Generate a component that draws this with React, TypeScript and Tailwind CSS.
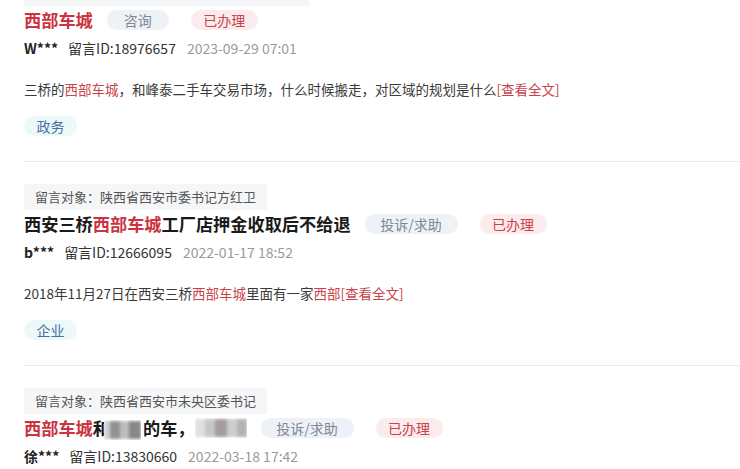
import React from "react";

const RED = "text-[#cc3340]";

type Item = {
  target?: string;
  title: React.ReactNode;
  type: string;
  typeW: string;
  user: string;
  id: string;
  date: string;
  body?: React.ReactNode;
  tag?: string;
};

const Hl = ({ children }: { children: React.ReactNode }) => <span className="text-[#c9434b]">{children}</span>;

// mosaic used to hide part of the third title
const Blur = ({ w, dark }: { w: number; dark?: boolean }) => (
  <span className="inline-flex h-[20px] items-center overflow-hidden bg-white align-middle" style={{ width: w }}>
    <span className="flex h-[18px] w-full blur-[1.5px]">
      {dark ? (
        <>
          <span className="h-full w-[6px] bg-[#d0d0d0]" />
          <span className="h-full w-[10px] bg-[#929292]" />
          <span className="h-full w-[9px] bg-[#bdbdbd]" />
          <span className="h-full w-[12px] bg-[#888]" />
        </>
      ) : (
        <>
          <span className="h-full w-[10px] bg-[#e0e0e0]" />
          <span className="h-full w-[10px] bg-[#c6c6c6]" />
          <span className="h-full w-[12px] bg-[#a59d9d]" />
          <span className="h-full w-[10px] bg-[#cdcdcd]" />
          <span className="h-full w-[10px] bg-[#b3b3b3]" />
        </>
      )}
    </span>
  </span>
);

const items: Item[] = [
  {
    title: <span className={RED}>西部车城</span>,
    type: "咨询",
    typeW: "w-[62px]",
    user: "W***",
    id: "留言ID:18976657",
    date: "2023-09-29 07:01",
    body: (
      <>
        三桥的<Hl>西部车城</Hl>，和峰泰二手车交易市场，什么时候搬走，对区域的规划是什么<Hl>[查看全文]</Hl>
      </>
    ),
    tag: "政务",
  },
  {
    target: "留言对象：陕西省西安市委书记方红卫",
    title: (
      <>
        西安三桥<span className={RED}>西部车城</span>工厂店押金收取后不给退
      </>
    ),
    type: "投诉/求助",
    typeW: "w-[93px]",
    user: "b***",
    id: "留言ID:12666095",
    date: "2022-01-17 18:52",
    body: (
      <>
        2018年11月27日在西安三桥<Hl>西部车城</Hl>里面有一家<Hl>西部</Hl><Hl>[查看全文]</Hl>
      </>
    ),
    tag: "企业",
  },
  {
    target: "留言对象：陕西省西安市未央区委书记",
    title: (
      <span className="inline-flex items-center">
        <span className={RED}>西部车城</span>
        <span>和</span>
        <span className="-ml-[6px]">
          <Blur w={37} dark />
        </span>
        <span className="ml-[2px]">的车，</span>
        <Blur w={52} />
      </span>
    ),
    type: "投诉/求助",
    typeW: "w-[93px]",
    user: "徐***",
    id: "留言ID:13830660",
    date: "2022-03-18 17:42",
  },
];

const Pill = ({ text, w, red }: { text: string; w: string; red?: boolean }) => (
  <span
    className={`${w} inline-flex h-[20px] shrink-0 items-center justify-center rounded-full text-[14px] font-normal leading-[20px] ${
      red ? "bg-[#fcebec] text-[#c9434b]" : "bg-[#eef2f7] text-[#7d8896]"
    }`}
  >
    {text}
  </span>
);

const Row = ({ it }: { it: Item }) => (
  <div className="border-b border-[#e9e9e9] pt-[22px] pb-[25px]">
    {it.target ? (
      <div className="h-[26px] w-fit bg-[#f5f6f8] px-[11px] text-[13px] leading-[26px] text-[#555]">{it.target}</div>
    ) : (
      <div className="h-[26px] w-[286px] bg-[#f5f6f8]" />
    )}
    <div className="flex h-[28px] items-center">
      <h3 className="text-[17.2px] font-bold leading-[28px] text-[#1a1a1a]">{it.title}</h3>
      <div className="ml-[14px] flex items-center gap-[22px]">
        <Pill text={it.type} w={it.typeW} />
        <Pill text="已办理" w="w-[67px]" red />
      </div>
    </div>
    <div className="mt-[4px] flex h-[20px] items-center gap-[10px] text-[14px] leading-[20px]">
      <span className="font-bold text-[#222]">{it.user}</span>
      <span className="text-[#333]">{it.id}</span>
      <span className="ml-[1px] text-[#9a9a9a]">{it.date}</span>
    </div>
    {it.body && <p className="mt-[20px] text-[13.5px] leading-[22px] text-[#3a3a3a]">{it.body}</p>}
    {it.tag && (
      <div className="mt-[16px] flex">
        <span className="inline-flex h-[20px] w-[53px] items-center justify-center rounded-full bg-[#ecf9f9] text-[14px] leading-[20px] text-[#4a6fa5]">
          {it.tag}
        </span>
      </div>
    )}
  </div>
);

export default function App() {
  return (
    <div
      className="h-[469px] w-[740px] overflow-hidden bg-white"
      style={{ fontFamily: '"Noto Sans CJK SC", "Noto Sans", sans-serif' }}
    >
      <div className="-mt-[42px] pl-[24px]">
        {items.map((it, i) => (
          <Row key={i} it={it} />
        ))}
      </div>
    </div>
  );
}
